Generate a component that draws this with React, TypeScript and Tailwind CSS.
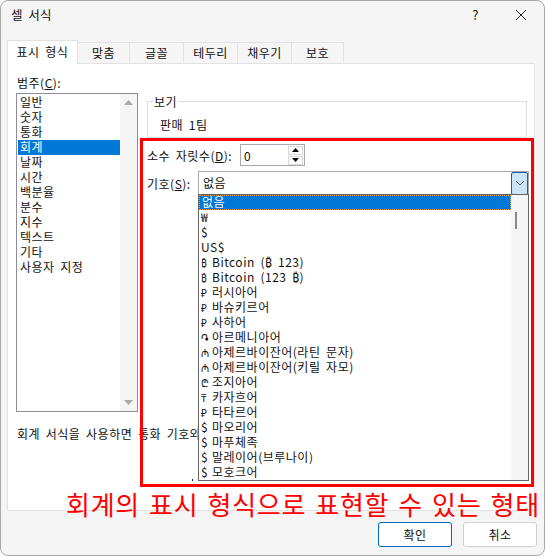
const font = { fontFamily: '"Noto Sans CJK KR", "Noto Sans", "DejaVu Sans", sans-serif' };

const tabs = [
  { t: "표시 형식", w: "w-[71px]", active: true },
  { t: "맞춤", w: "w-[53px]" },
  { t: "글꼴", w: "w-[55px]" },
  { t: "테두리", w: "w-[55px]" },
  { t: "채우기", w: "w-[55px]" },
  { t: "보호", w: "w-[53px]" },
];
const cats = ["일반", "숫자", "통화", "회계", "날짜", "시간", "백분율", "분수", "지수", "텍스트", "기타", "사용자 지정"];
const symbols: [string, string][] = [
  ["₩", ""], ["$", ""], ["US$", ""], ["₿", "Bitcoin (₿ 123)"], ["₿", "Bitcoin (123 ₿)"],
  ["₽", "러시아어"], ["₽", "바슈키르어"], ["₽", "사하어"], ["֏", "아르메니아어"],
  ["₼", "아제르바이잔어(라틴 문자)"], ["₼", "아제르바이잔어(키릴 자모)"], ["₾", "조지아어"],
  ["₸", "카자흐어"], ["₽", "타타르어"], ["$", "마오리어"], ["$", "마푸체족"], ["$", "말레이어(브루나이)"], ["$", "모호크어"],
];

function Tri({ up }: { up?: boolean }) {
  return (
    <svg width="9" height="5" viewBox="0 0 9 5">
      <path d={up ? "M0 5L4.5 0L9 5Z" : "M0 0L9 0L4.5 5Z"} fill="currentColor" />
    </svg>
  );
}

export default function App() {
  return (
    <div style={font} className="relative w-[545px] h-[556px] overflow-hidden bg-white">
      <div className="w-[545px] h-[556px] flex flex-col rounded-[8px] border border-[#a8a8a8] bg-[#f5f5f5] text-[12px] leading-[15px] text-[#111] box-border tracking-[0.5px] [word-spacing:2.5px]">
        {/* title bar */}
        <div className="h-[40px] shrink-0 flex items-start pl-[10px]">
          <span className="mt-[5px] text-[12.5px] leading-[18px] tracking-[0.2px]">셀 서식</span>
          <span className="ml-auto mt-[5px] text-[13px] leading-[18px] mr-[36px]">?</span>
          <svg width="12" height="12" viewBox="0 0 12 12" className="mt-[8px] mr-[17px]">
            <path d="M1 1L11 11M11 1L1 11" stroke="#222" strokeWidth="1" fill="none" />
          </svg>
        </div>
        {/* tabs */}
        <div className="flex items-end h-[23px] ml-[6px] shrink-0 relative z-10">
          {tabs.map((tab) => (
            <div
              key={tab.t}
              className={`${tab.w} flex items-center justify-center border border-[#e2e2e2] -ml-px first:ml-0 pb-[2px] ${
                tab.active ? "h-[24px] bg-white border-b-0" : "h-[22px] bg-[#f5f5f5]"
              }`}
            >
              {tab.t}
            </div>
          ))}
        </div>
        {/* panel */}
        <div className="relative ml-[6px] mr-[9px] h-[448px] shrink-0 bg-white border border-[#e2e2e2] -mt-px">
          <div className="flex pl-[8px] pt-[11px]">
            <div className="w-[122px] shrink-0">
              <div className="h-[18px] pl-px">
                범주(<span className="underline">C</span>):
              </div>
              <div className="h-[319px] flex border border-[#8c8c9c] bg-white">
                <div className="flex-1 pt-px pl-px">
                  {cats.map((c) => (
                    <div key={c} className={`pl-[2px] h-[15px] leading-[13px] ${c === "회계" ? "bg-[#0078d7] text-white" : ""}`}>
                      {c}
                    </div>
                  ))}
                </div>
                <div className="w-[17px] bg-[#f5f5f5] flex flex-col items-center justify-between py-[6px] text-[#a8a8a8]">
                  <Tri up />
                  <Tri />
                </div>
              </div>
            </div>
            <div className="ml-[9px] w-[382px] pt-[26px]">
              <div className="relative h-[37px] w-[380px] border border-[#dcdcdc]">
                <span className="absolute left-[5px] -top-[8px] bg-white px-[1px]">보기</span>
                <div className="pl-[12px] pt-[15px]">판매 1팀</div>
              </div>
              <div className="flex items-center mt-[6px] h-[22px]">
                <span className="w-[93px]">소수 자릿수(<span className="underline">D</span>):</span>
                <div className="w-[65px] h-[22px] border border-[#a8a8b0] flex items-center justify-between pl-[3px] pr-[1px] bg-white">
                  <span>0</span>
                  <div className="flex flex-col w-[15px] gap-[1px]">
                    <div className="h-[9px] border border-[#d8d8d8] flex items-center justify-center"><svg width="7" height="4" viewBox="0 0 7 4"><path d="M0 4L3.5 0L7 4Z" /></svg></div>
                    <div className="h-[9px] border border-[#d8d8d8] flex items-center justify-center"><svg width="7" height="4" viewBox="0 0 7 4"><path d="M0 0L7 0L3.5 4Z" /></svg></div>
                  </div>
                </div>
              </div>
              <div className="flex items-center mt-[5px] h-[24px]">
                <span className="w-[51px]">기호(<span className="underline">S</span>):</span>
                <div className="w-[331px] h-[24px] border border-[#a8a8b0] flex items-center justify-between pl-[4px] bg-white">
                  <span className="pb-[2px]">없음</span>
                  <div className="w-[17px] h-[23px] border border-[#1a5f9e] rounded-[2px] bg-[#cce4f7] flex items-center justify-center">
                    <svg width="10" height="6" viewBox="0 0 10 6"><path d="M1 1L5 5L9 1" stroke="#555" fill="none" /></svg>
                  </div>
                </div>
              </div>
            </div>
          </div>
          <div className="ml-[9px] mt-[14px] w-[182px] overflow-hidden whitespace-nowrap">회계 서식을 사용하면 통화 기호와 소수점 자리가 맞춰집니다.</div>

          {/* dropdown list */}
          <div className="absolute left-[190px] top-[130px] w-[331px] h-[287px] z-10 flex border border-[#646464] bg-white">
            <div className="flex-1 overflow-hidden pl-[2px]">
              <div className="-ml-[2px] pl-[2px] h-[15px] bg-[#0078d7] text-white border border-dotted border-[#f0a040] leading-[11px]">없음</div>
              {symbols.map(([s, t], i) => (
                <div key={i} className="h-[15px] leading-[13px] whitespace-nowrap">
                  {t ? <span className={`inline-block w-[11px] tracking-normal ${s === "$" ? "text-[12px]" : "text-[10px]"}`}>{s}</span> : s}
                  {t ? <span>{t}</span> : null}
                </div>
              ))}
            </div>
            <div className="w-[17px] bg-[#f5f5f5] relative">
              <div className="absolute left-[4px] top-[17px] w-[2px] h-[17px] bg-[#8a8a8a]" />
            </div>
          </div>
          <div className="absolute left-[184px] top-[415px] w-px h-[2px] bg-[#222]" />
        </div>
        {/* buttons */}
        <div className="flex justify-end gap-[11px] pr-[7px] mt-[11px]">
          <button className="w-[74px] h-[25px] rounded-[3px] border-[1.5px] border-[#0067c0] bg-white">확인</button>
          <button className="w-[74px] h-[25px] rounded-[3px] border border-[#d0d0d0] bg-white">취소</button>
        </div>
      </div>
      {/* annotation */}
      <div className="absolute left-[66px] top-[487px] z-20 text-[#ff0000] text-[26px] leading-[34px] whitespace-nowrap tracking-[0.75px] [word-spacing:2.5px]">
        회계의 표시 형식으로 표현할 수 있는 형태
      </div>
      <div className="absolute left-[140px] top-[138px] w-[394px] h-[349px] border-[3px] border-[#ff0000] z-20 pointer-events-none" />
    </div>
  );
}
